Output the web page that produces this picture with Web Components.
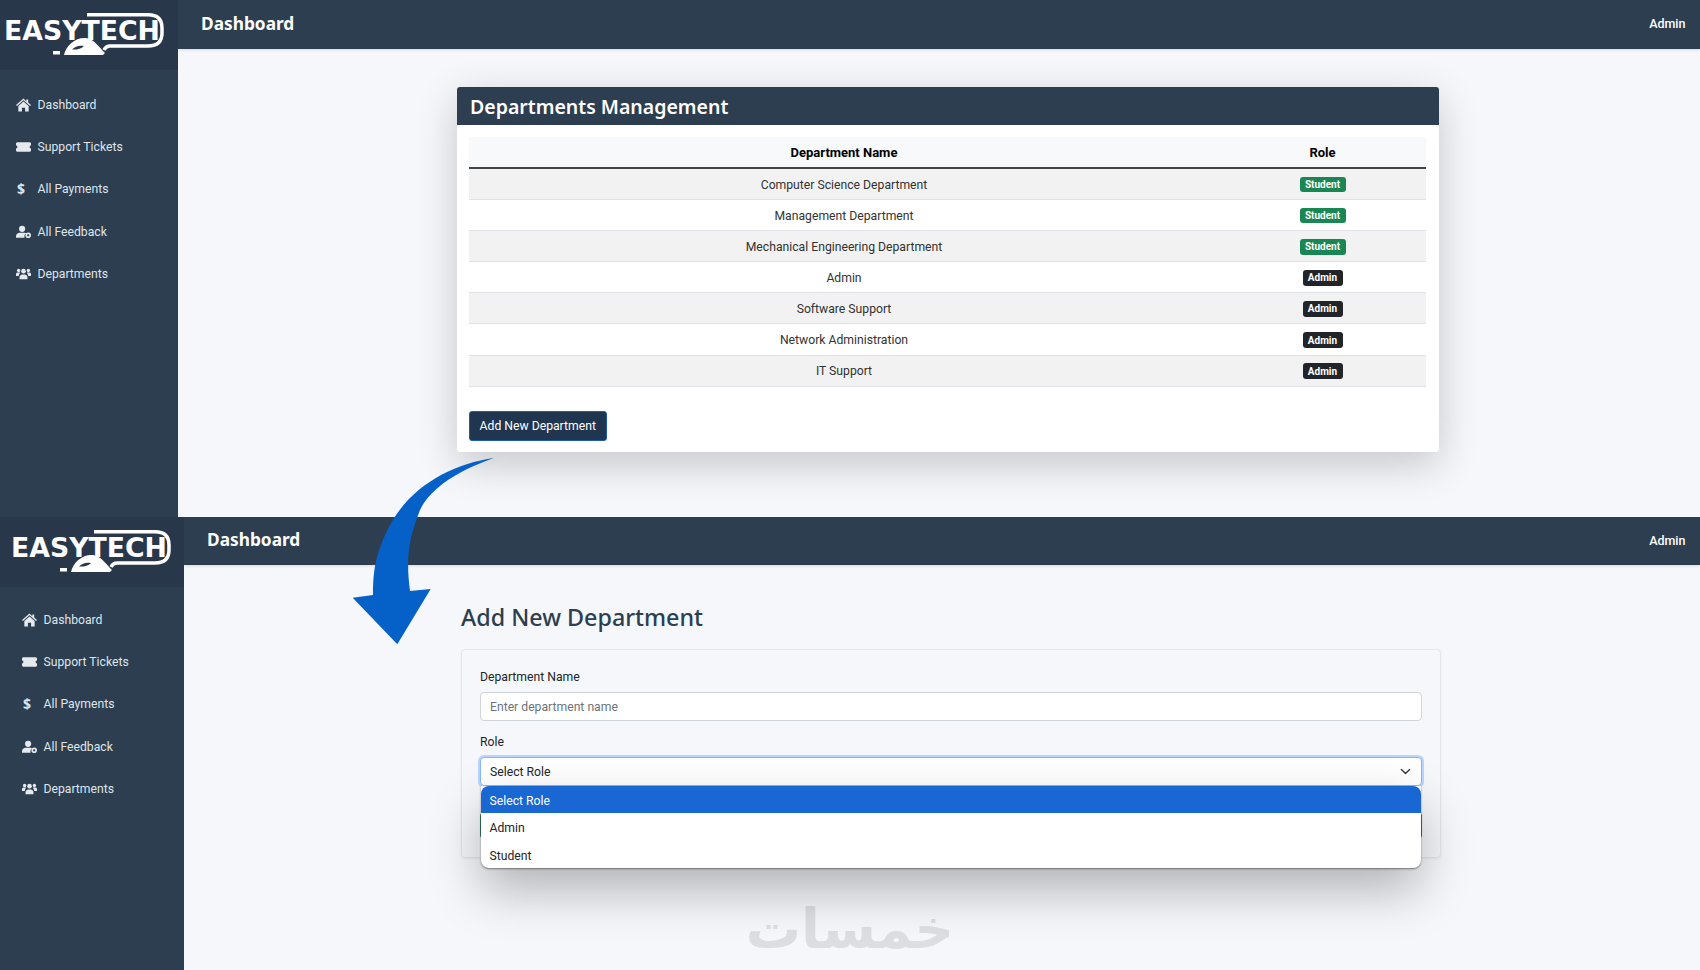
<!DOCTYPE html>
<html lang="en">
<head>
<meta charset="utf-8">
<title>Departments</title>
<style>
  html, body { margin: 0; height: 970px; overflow: hidden; background: #f5f7fb; }
  body { position: relative; font-family: Roboto, "Liberation Sans", sans-serif; color: #212529; }
</style>
</head>
<body>
  <app-screen style="--side: 178px; --screen-h: 517px; --logo-x: 0px; --main-pad: 38px 261px 0 279px; --bar-h: 49px; --nav-x: 16px; --nav-top: 13.500px;">
    <side-bar slot="side"></side-bar>
    <top-bar slot="top" heading="Dashboard" user="Admin"></top-bar>
    <dept-card heading="Departments Management"></dept-card>
  </app-screen>
  <app-screen style="--side: 184px; --screen-h: 453px; --logo-x: 7px; --main-pad: 36px 259px 0 277px; --bar-h: 48px; --nav-x: 22px; --nav-top: 11.500px;">
    <side-bar slot="side"></side-bar>
    <top-bar slot="top" heading="Dashboard" user="Admin"></top-bar>
    <dept-form></dept-form>
  </app-screen>
  <flow-arrow></flow-arrow>
  <water-mark></water-mark>

<script>
const icons = {
  home: '<path d="M8 0 0 7l1 1 7-6 7 6 1-1-3-2.600V1h-2v2.100z"/><path d="M2.500 8 8 3.300 13.500 8v6H9.700v-4H6.300v4H2.500z"/>',
  ticket: '<path d="M1 2h14l1 1v2.500a1.500 1.500 0 0 0 0 3V11l-1 1H1l-1-1V8.500a1.500 1.500 0 0 0 0-3V3z"/>',
  feedback: '<circle cx="6.500" cy="3.600" r="3.300"/><path d="M0 13v-1.500C0 9.300 2 7.800 4 7.800h5c.8 0 1.500.2 2 .6a4 4 0 0 0-1.800 4.600z"/><path fill-rule="evenodd" d="M13 7.500a3 3 0 1 0 0 6 3 3 0 0 0 0-6zm0 1.800a1.200 1.200 0 1 1 0 2.400 1.200 1.200 0 0 1 0-2.400z"/>',
  users: '<circle cx="8" cy="4" r="2.500"/><path d="M3.800 12.500v-2C3.800 8.600 5.500 7.500 6.500 7.500h3c1 0 2.700 1.100 2.700 3v2z"/><circle cx="2.800" cy="3.300" r="1.800"/><circle cx="13.200" cy="3.300" r="1.800"/><path d="M0 9V7.200C0 6 1 5.500 1.800 5.500h1.900c.3 0 .5.100.7.300-.7.600-1.200 1.500-1.400 3.200z"/><path d="M16 9V7.200C16 6 15 5.500 14.200 5.500h-1.900c-.3 0-.5.100-.7.300.7.600 1.200 1.500 1.400 3.200z"/>'
}

const screenTemplate = document.createElement('template')
screenTemplate.innerHTML = `
  <style>
    :host { display: grid; grid-template-columns: var(--side) 1fr; height: var(--screen-h); position: relative; }
    .main { display: flex; flex-direction: column; min-width: 0; background: #f5f7fb; overflow: hidden; }
    .content { flex: 1; padding: var(--main-pad); }
  </style>
  <slot name="side"></slot>
  <div class="main">
    <slot name="top"></slot>
    <div class="content"><slot></slot></div>
  </div>
`
class AppScreen extends HTMLElement {
  constructor () {
    super()
    this.attachShadow({ mode: 'open' })
    this.shadowRoot.appendChild(screenTemplate.content.cloneNode(true))
  }
}
customElements.define('app-screen', AppScreen)

const logoTemplate = document.createElement('template')
logoTemplate.innerHTML = `
  <style>
    :host { display: flex; align-items: flex-start; height: 70px; background: #283749; padding-left: var(--logo-x); }
    svg { display: block; }
  </style>
  <svg width="170" height="70" viewBox="0 0 170 70" fill="#fff">
    <text x="4" y="40" font-family="DejaVu Sans" font-weight="700" font-size="27" textLength="156" lengthAdjust="spacingAndGlyphs">EASYTECH</text>
    <path d="M87 14.800H148Q162 14.800 162 28V33Q162 46 148 46H110Q106 46 104 50" fill="none" stroke="#fff" stroke-width="3.500"/>
    <path fill-rule="evenodd" d="M64 55C66 45 76 37 86 38 94 39 99 47 105 53L103 55zM72 49.500C75 46 80 45 84 46 81 49 76 50 72 49.500z"/>
    <rect x="53" y="51" width="7" height="3.500"/>
  </svg>
`
class BrandLogo extends HTMLElement {
  constructor () {
    super()
    this.attachShadow({ mode: 'open' })
    this.shadowRoot.appendChild(logoTemplate.content.cloneNode(true))
  }
}
customElements.define('brand-logo', BrandLogo)

const navTemplate = document.createElement('template')
navTemplate.innerHTML = `
  <style>
    :host { display: flex; align-items: center; height: 42.3px; padding-left: var(--nav-x); color: #dfe4ea; font-size: 12.2px; }
    .icon { width: 15px; margin-right: 6.5px; display: flex; justify-content: flex-start; }
    svg { width: 15px; height: 14px; fill: #e6e9ed; display: block; }
    b { font: 700 14px "Noto Sans", sans-serif; padding-left: 1px; line-height: 14px; }
  </style>
  <span class="icon"></span>
  <slot></slot>
`
class NavItem extends HTMLElement {
  constructor () {
    super()
    this.attachShadow({ mode: 'open' })
    this.shadowRoot.appendChild(navTemplate.content.cloneNode(true))
  }

  connectedCallback () {
    const name = this.getAttribute('icon')
    this.shadowRoot.querySelector('.icon').innerHTML = name === 'dollar'
      ? '<b>$</b>'
      : `<svg viewBox="0 0 16 14">${icons[name]}</svg>`
  }
}
customElements.define('nav-item', NavItem)

const sideTemplate = document.createElement('template')
sideTemplate.innerHTML = `
  <style>
    :host { display: block; background: #2c3e50; }
    nav { padding-top: var(--nav-top); }
  </style>
  <brand-logo></brand-logo>
  <nav>
    <nav-item icon="home">Dashboard</nav-item>
    <nav-item icon="ticket">Support Tickets</nav-item>
    <nav-item icon="dollar">All Payments</nav-item>
    <nav-item icon="feedback">All Feedback</nav-item>
    <nav-item icon="users">Departments</nav-item>
  </nav>
`
class SideBar extends HTMLElement {
  constructor () {
    super()
    this.attachShadow({ mode: 'open' })
    this.shadowRoot.appendChild(sideTemplate.content.cloneNode(true))
  }
}
customElements.define('side-bar', SideBar)

const barTemplate = document.createElement('template')
barTemplate.innerHTML = `
  <style>
    :host { display: flex; align-items: center; justify-content: space-between; height: var(--bar-h); flex: none; background: #2c3e50; color: #fff; padding: 0 14.500px 3px 23px; box-sizing: border-box; box-shadow: 0 1px 3px rgba(0,0,0,.12); position: relative; }
    h1 { margin: 0; font: 700 17.3px "Noto Sans", sans-serif; }
    span { font-size: 12.500px; font-weight: 500; padding-top: 1px; }
  </style>
  <h1></h1>
  <span></span>
`
class TopBar extends HTMLElement {
  constructor () {
    super()
    this.attachShadow({ mode: 'open' })
    this.shadowRoot.appendChild(barTemplate.content.cloneNode(true))
  }

  connectedCallback () {
    this.shadowRoot.querySelector('h1').textContent = this.getAttribute('heading')
    this.shadowRoot.querySelector('span').textContent = this.getAttribute('user')
  }
}
customElements.define('top-bar', TopBar)

const badgeTemplate = document.createElement('template')
badgeTemplate.innerHTML = `
  <style>
    :host { display: inline-flex; align-items: center; justify-content: center; height: 15.6px; width: 40px; border-radius: 3px; color: #fff; font-size: 10px; font-weight: 700; vertical-align: middle; background: #212529; }
    :host([kind="Student"]) { background: #198754; width: 46px; }
  </style>
  <slot></slot>
`
class RoleBadge extends HTMLElement {
  constructor () {
    super()
    this.attachShadow({ mode: 'open' })
    this.shadowRoot.appendChild(badgeTemplate.content.cloneNode(true))
  }
}
customElements.define('role-badge', RoleBadge)

const departments = [
  ['Computer Science Department', 'Student'],
  ['Management Department', 'Student'],
  ['Mechanical Engineering Department', 'Student'],
  ['Admin', 'Admin'],
  ['Software Support', 'Admin'],
  ['Network Administration', 'Admin'],
  ['IT Support', 'Admin']
]

const cardTemplate = document.createElement('template')
cardTemplate.innerHTML = `
  <style>
    :host { display: block; background: #fff; border-radius: 3px; height: 365px; box-shadow: 0 12px 40px rgba(0,0,0,.2); }
    header { background: #2c3e50; color: #fff; height: 38px; display: flex; align-items: center; padding-left: 13px; border-radius: 3px 3px 0 0; }
    h2 { margin: 0; font: 600 19.500px "Noto Sans", sans-serif; }
    .body { padding: 12px 13px 0 12px; }
    table { width: 100%; border-collapse: collapse; table-layout: fixed; font-size: 12.2px; color: #333; }
    th { background: #f8f9fa; color: #000; height: 30px; font-size: 13px; font-weight: 700; border-bottom: 2px solid #444; padding: 0; }
    td { height: 29.100px; padding: 1px 0 0; text-align: center; border-bottom: 1px solid #dee2e6; }
    tbody tr:nth-child(odd) td { background: #f2f2f2; }
    .name { width: 750px; }
    button { display: block; margin-top: 24.500px; font: 400 12.2px Roboto, sans-serif; background: #1f3550; color: #fff; border: 1px solid #1c5ea8; border-radius: 3px; height: 29.5px; width: 137.5px; padding: 0; }
  </style>
  <header><h2></h2></header>
  <div class="body">
    <table>
      <thead><tr><th class="name">Department Name</th><th>Role</th></tr></thead>
      <tbody></tbody>
    </table>
    <button type="button">Add New Department</button>
  </div>
`
class DeptCard extends HTMLElement {
  constructor () {
    super()
    this.attachShadow({ mode: 'open' })
    this.shadowRoot.appendChild(cardTemplate.content.cloneNode(true))
  }

  connectedCallback () {
    this.shadowRoot.querySelector('h2').textContent = this.getAttribute('heading')
    this.shadowRoot.querySelector('tbody').innerHTML = departments
      .map(([name, role]) => `<tr><td>${name}</td><td><role-badge kind="${role}">${role}</role-badge></td></tr>`)
      .join('')
  }
}
customElements.define('dept-card', DeptCard)

const selectTemplate = document.createElement('template')
selectTemplate.innerHTML = `
  <style>
    :host { display: block; position: relative; font-size: 12.2px; }
    .field { height: 29px; box-sizing: border-box; display: flex; align-items: center; justify-content: space-between; padding: 1px 10px 0 9px; background: #fff; border: 1px solid #86b7fe; border-radius: 4px; box-shadow: 0 0 0 2px rgba(13,110,253,.25); color: #212529; }
    svg { width: 11px; height: 11px; fill: none; stroke: #343a40; stroke-width: 2; stroke-linecap: round; stroke-linejoin: round; }
    ul { position: absolute; z-index: 2; left: .5px; right: 1px; top: 29.500px; margin: 0; padding: 0; list-style: none; background: #fff; border-radius: 0 0 8px 8px; overflow: hidden; box-shadow: 0 1px 2px rgba(0,0,0,.45), 0 22px 50px rgba(0,0,0,.28); }
    li { height: 27.3px; box-sizing: border-box; display: flex; align-items: center; padding: 3px 0 0 9px; }
    li.on { background: #1967d2; color: #fff; border-radius: 8px 8px 0 0; }
  </style>
  <div class="field">
    <span>Select Role</span>
    <svg viewBox="0 0 16 16"><path d="m2 5 6 6 6-6"/></svg>
  </div>
  <ul>
    <li class="on">Select Role</li>
    <li>Admin</li>
    <li>Student</li>
  </ul>
`
class RoleSelect extends HTMLElement {
  constructor () {
    super()
    this.attachShadow({ mode: 'open' })
    this.shadowRoot.appendChild(selectTemplate.content.cloneNode(true))
  }
}
customElements.define('role-select', RoleSelect)

const formTemplate = document.createElement('template')
formTemplate.innerHTML = `
  <style>
    :host { display: block; font-size: 12.2px; }
    h2 { margin: 0 0 16px; font: 500 23.3px/32px "Noto Sans", sans-serif; color: #2c3e50; }
    .box { height: 209px; box-sizing: border-box; padding: 17.500px 18px 0 18px; border: 1px solid #e3e6ea; border-radius: 4px; box-shadow: 0 1px 3px rgba(0,0,0,.05); }
    label { display: block; line-height: 17px; padding-top: 1px; margin-bottom: 6px; color: #212529; }
    .input { height: 29px; box-sizing: border-box; display: flex; align-items: center; padding: 1px 9px 0; background: #fff; border: 1px solid #ced4da; border-radius: 4px; color: #6c757d; margin-bottom: 12px; }
    .submit { height: 25px; margin-top: 27px; background: #2f7d5b; border-radius: 3px; }
  </style>
  <h2>Add New Department</h2>
  <div class="box">
    <label>Department Name</label>
    <div class="input">Enter department name</div>
    <label>Role</label>
    <role-select></role-select>
    <div class="submit"></div>
  </div>
`
class DeptForm extends HTMLElement {
  constructor () {
    super()
    this.attachShadow({ mode: 'open' })
    this.shadowRoot.appendChild(formTemplate.content.cloneNode(true))
  }
}
customElements.define('dept-form', DeptForm)

const arrowTemplate = document.createElement('template')
arrowTemplate.innerHTML = `
  <style>
    :host { position: absolute; left: 0; top: 0; width: 1700px; height: 970px; pointer-events: none; }
    svg { display: block; }
  </style>
  <svg width="1700" height="970" viewBox="0 0 1700 970">
    <path fill="#0561c8" d="M494 458C452 464 410 486 389 527 376 552 373 570 373 595L352.700 597.700 397.300 644.300 430.700 589 410 591C406 560 408 540 420 510 432 486 460 470 494 458Z"/>
  </svg>
`
class FlowArrow extends HTMLElement {
  constructor () {
    super()
    this.attachShadow({ mode: 'open' })
    this.shadowRoot.appendChild(arrowTemplate.content.cloneNode(true))
  }
}
customElements.define('flow-arrow', FlowArrow)

const markTemplate = document.createElement('template')
markTemplate.innerHTML = `
  <style>
    :host { position: absolute; left: 748px; top: 894px; width: 204px; height: 70px; display: flex; justify-content: center; align-items: center; color: #dcdee2; font: 700 55px "DejaVu Sans", sans-serif; direction: rtl; pointer-events: none; }
  </style>
  <span>خمسات</span>
`
class WaterMark extends HTMLElement {
  constructor () {
    super()
    this.attachShadow({ mode: 'open' })
    this.shadowRoot.appendChild(markTemplate.content.cloneNode(true))
  }
}
customElements.define('water-mark', WaterMark)
</script>
</body>
</html>
